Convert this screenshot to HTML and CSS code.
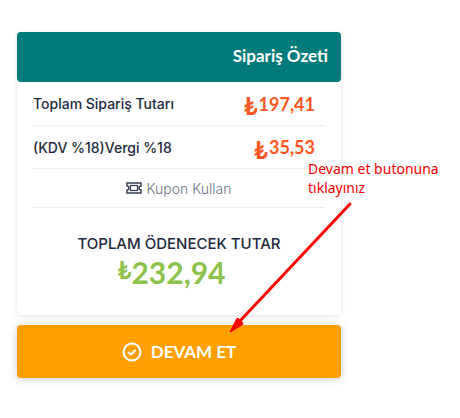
FILE: index.html
```html
<!DOCTYPE html>
<html lang="tr">
<head>
  <meta charset="UTF-8">
  <meta name="viewport" content="width=device-width, initial-scale=1.0">
  <title>Sipariş Özeti</title>
  <link rel="stylesheet" href="styles.css">
</head>
<body>
  <div class="summary">
    <h2 class="summary-title">Sipariş Özeti</h2>

    <div class="summary-body">
      <div class="row">
        <span class="label">Toplam Sipariş Tutarı</span>
        <span class="price"><span class="lira">₺</span>197,41</span>
      </div>
      <div class="row">
        <span class="label">(KDV %18)Vergi %18</span>
        <span class="price"><span class="lira">₺</span>35,53</span>
      </div>
      <a href="#" class="coupon">
        <svg width="16" height="12" viewBox="0 0 16 12" fill="none" stroke="#323c50">
          <path d="M1 1h14v3a2 2 0 0 0 0 4v3H1V8a2 2 0 0 0 0-4z" stroke-width="1.4"/>
          <rect x="4.5" y="3.5" width="7" height="5" stroke-width="1.2"/>
        </svg>
        Kupon Kullan
      </a>
      <div class="total">
        <div class="total-label">TOPLAM ÖDENECEK TUTAR</div>
        <div class="total-price"><span class="total-lira">₺</span>232,94</div>
      </div>
    </div>
  </div>

  <button type="button" class="continue">
    <svg width="20" height="20" viewBox="0 0 20 20" fill="none" stroke="#fff" stroke-width="2">
      <circle cx="10" cy="10" r="8.4"/>
      <path d="M6 10l3 2.5 4.5-4.5"/>
    </svg>
    DEVAM ET
  </button>

  <p class="note">Devam et butonuna tıklayınız</p>
  <svg class="arrow" width="124" height="132" viewBox="0 0 124 132">
    <path d="M121 3L10 121" stroke="#f00" stroke-width="3" stroke-linecap="round"/>
    <path d="M1 131L7 118l1-1 6 6z" fill="#f00"/>
    <path d="M1 131L8 118l1-1 5 5-1 2z" fill="#f00" stroke="#f00"/>
  </svg>
</body>
</html>
```

FILE: styles.css
```css
* {
  box-sizing: border-box;
}

body {
  position: relative;
  margin: 0;
  padding: 32px 119px 32px 17px;
  background-color: #fff;
  color: #1e2a40;
  font-family: Inter, sans-serif;
  font-size: 14px;
}

.summary {
  border-radius: 4px;
  box-shadow: 0 1px 5px rgba(0, 0, 0, 0.12);
}

.summary-title {
  margin: 0;
  padding: 12px 13px 14px;
  background-color: #007b7b;
  border-radius: 4px;
  color: #fff;
  font-family: Lato, sans-serif;
  font-size: 17px;
  font-weight: 700;
  line-height: 24px;
  text-align: right;
}

.summary-body {
  padding: 0 16px;
}

.row {
  display: flex;
  justify-content: space-between;
  align-items: center;
  height: 43px;
  padding-right: 10px;
  border-bottom: 1px dotted #ddd;
}

.row:first-child {
  height: 44px;
}

.label {
  font-weight: 500;
}

.price {
  color: #ff5722;
  font-family: Lato, sans-serif;
  font-size: 18px;
  font-weight: 700;
  line-height: 24px;
}

.lira {
  margin-right: 1px;
  font-size: 24px;
  line-height: 16px;
  vertical-align: sub;
}

.coupon {
  display: flex;
  justify-content: center;
  align-items: center;
  gap: 4px;
  height: 39px;
  border-bottom: 1px dotted #ddd;
  color: #6b7484;
  font-weight: 300;
  text-decoration: none;
}

.total {
  padding: 24px 0 27px;
  text-align: center;
}

.total-label {
  font-weight: 500;
  font-size: 15px;
  line-height: 24px;
}

.total-price {
  padding-right: 15px;
  color: #8bc34a;
  font-family: Lato, sans-serif;
  font-size: 30px;
  font-weight: 700;
  line-height: 32px;
}

.total-lira {
  font-size: 24px;
  line-height: 16px;
  vertical-align: 5px;
}

.continue {
  display: flex;
  justify-content: center;
  align-items: center;
  gap: 9px;
  width: 100%;
  margin-top: 10px;
  padding: 14px;
  background-color: #ff9f00;
  border: none;
  border-radius: 4px;
  box-shadow: 0 1px 10px rgba(0, 0, 0, 0.2);
  color: #fff;
  font-family: Lato, sans-serif;
  font-size: 17px;
  font-weight: 700;
  line-height: 25px;
  cursor: pointer;
}

.note {
  position: absolute;
  top: 159px;
  left: 308px;
  width: 140px;
  margin: 0;
  color: #f00;
  font-family: "Noto Sans", sans-serif;
  font-size: 14px;
  line-height: 19px;
}

.arrow {
  position: absolute;
  top: 201px;
  left: 229px;
  pointer-events: none;
}
```
